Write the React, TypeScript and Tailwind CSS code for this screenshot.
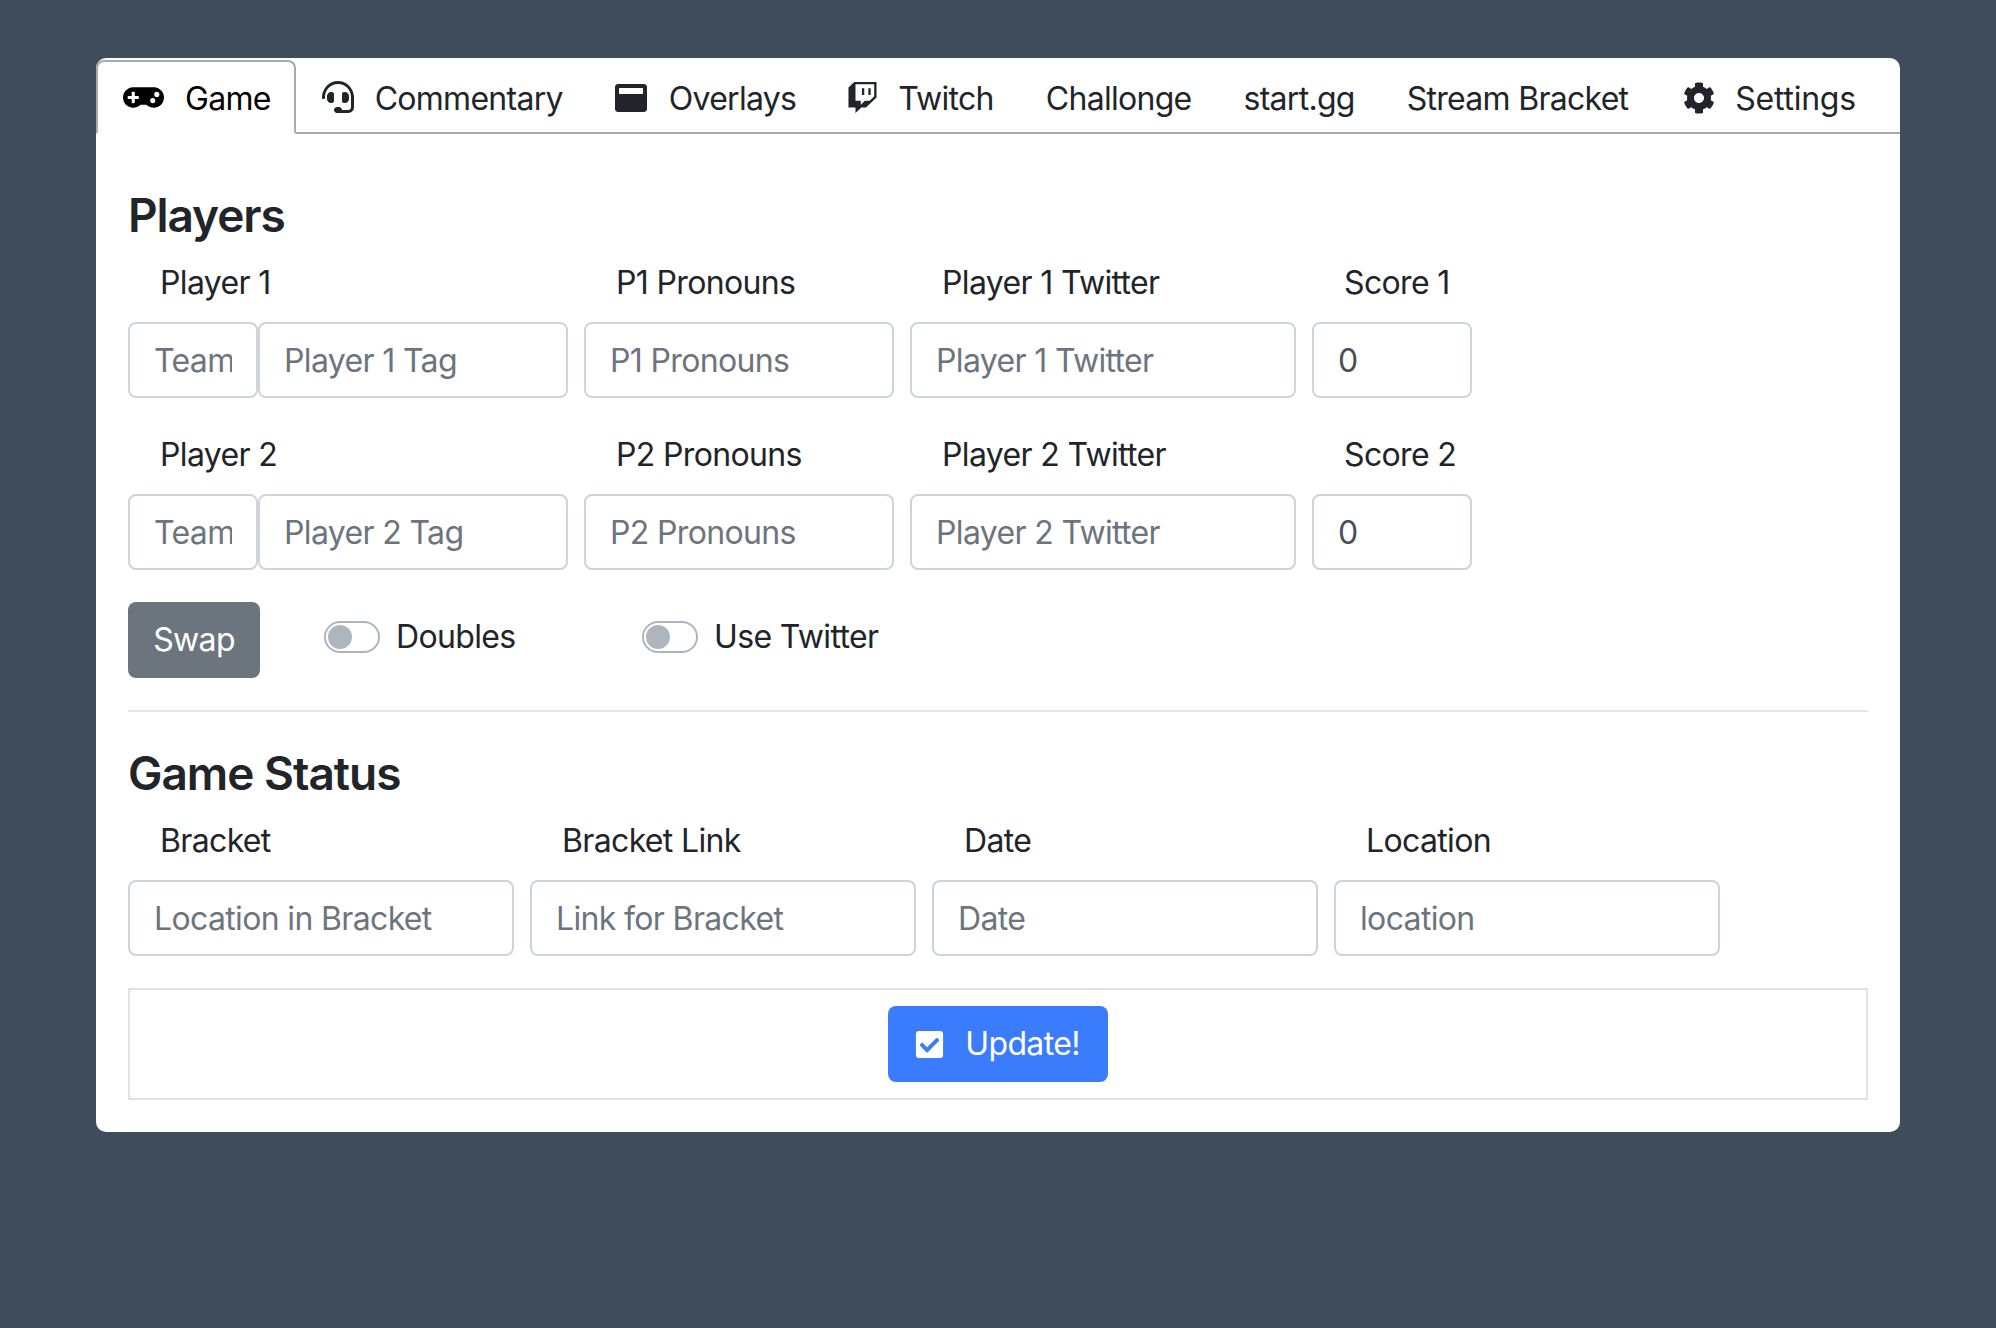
import React from "react";
import { FaGamepad, FaHeadset, FaWindowMaximize, FaTwitch, FaCog, FaCheckSquare } from "react-icons/fa";

const inputCls =
  "block h-[76px] rounded-[8px] border-2 border-[#ced4da] bg-white px-[24px] text-[#495057] placeholder:text-[#6c757d] outline-none min-w-0";

function Field({ label, width, placeholder, value }: { label: string; width: string; placeholder?: string; value?: string }) {
  return (
    <div className={width}>
      <div className="mb-[15px] h-12 px-[32px] leading-[48px] whitespace-nowrap">{label}</div>
      <input className={inputCls + " w-full"} placeholder={placeholder} defaultValue={value} />
    </div>
  );
}

function PlayerRow({ n }: { n: number }) {
  return (
    <div className="flex gap-4">
      <div className="w-[440px]">
        <div className="mb-[15px] h-12 px-[32px] leading-[48px]">Player {n}</div>
        <div className="flex">
          <input className={inputCls + " w-[130px]"} placeholder="Team" />
          <input className={inputCls + " w-[310px]"} placeholder={`Player ${n} Tag`} />
        </div>
      </div>
      <Field label={`P${n} Pronouns`} width="w-[310px]" placeholder={`P${n} Pronouns`} />
      <Field label={`Player ${n} Twitter`} width="w-[386px]" placeholder={`Player ${n} Twitter`} />
      <Field label={`Score ${n}`} width="w-[160px]" value="0" />
    </div>
  );
}

function Toggle({ label, width }: { label: string; width: string }) {
  return (
    <div className={"flex items-center " + width}>
      <span className="flex h-8 w-[56px] items-center rounded-full border-2 border-[#adb5bd] bg-white px-[2px]">
        <span className="h-6 w-6 rounded-full bg-[#adb5bd]" />
      </span>
      <span className="mt-[1px] ml-4 leading-8">{label}</span>
    </div>
  );
}

function Tab({ icon, label, active, labelClass }: { icon?: React.ReactNode; label: string; active?: boolean; labelClass?: string }) {
  return (
    <div
      className={
        "-mb-[2px] flex h-[74px] items-center whitespace-nowrap tracking-[-0.72px] " +
        (active
          ? "rounded-t-[8px] border-2 border-b-white border-[#a9a9a9] bg-white pr-[23px] pl-[25px] text-black"
          : "px-[26px] text-[#212529]")
      }
    >
      {icon}
      <span className={"mt-[3px] " + (labelClass ?? "")}>{label}</span>
    </div>
  );
}

export default function App() {
  return (
    <div
      className="min-h-[1328px] bg-[#3e4c5c] px-[96px] pt-[58px] text-[32px] tracking-[-0.65px] text-[#212529]"
      style={{ fontFamily: "Inter, 'Liberation Sans', sans-serif" }}
    >
      <div className="h-[1074px] rounded-[10px] bg-white">
        <div className="flex border-b-2 border-[#a9a9a9] pt-[2px]">
          <Tab active label="Game" icon={<FaGamepad className="mr-[21px] text-[41px]" />} />
          <Tab label="Commentary" icon={<FaHeadset className="mr-[21px] text-[32px]" />} />
          <Tab label="Overlays" icon={<FaWindowMaximize className="mt-[2px] mr-[22px] text-[32px]" />} />
          <Tab label="Twitch" icon={<FaTwitch className="-ml-[1px] mr-[20px] text-[31px]" />} />
          <Tab label="Challonge" />
          <Tab label="start.gg" />
          <Tab label="Stream Bracket" />
          <Tab
            label="Settings"
            labelClass="tracking-[-0.25px]"
            icon={<FaCog className="mt-[2px] ml-[3px] mr-[20px] text-[32px]" />}
          />
        </div>
        <div className="px-[32px] pt-[54px]">
          <h3 className="mb-[17px] text-[46px] leading-[54px] font-semibold tracking-[-1.1px]">Players</h3>
          <PlayerRow n={1} />
          <div className="h-[33px]" />
          <PlayerRow n={2} />
          <div className="mt-8 flex">
            <button className="h-[76px] w-[132px] rounded-[8px] bg-[#6c757d] text-white">Swap</button>
            <div className="ml-[64px] flex h-[68px] items-start pt-[18px]">
              <Toggle label="Doubles" width="w-[318px]" />
              <Toggle label="Use Twitter" width="w-[400px]" />
            </div>
          </div>
          <div className="mt-8 h-[2px] bg-[#e3e4e6]" />
          <h3 className="mt-[34px] mb-[17px] text-[46px] leading-[54px] font-semibold tracking-[-1px]">Game Status</h3>
          <div className="flex gap-4">
            <Field label="Bracket" width="w-[386px]" placeholder="Location in Bracket" />
            <Field label="Bracket Link" width="w-[386px]" placeholder="Link for Bracket" />
            <Field label="Date" width="w-[386px]" placeholder="Date" />
            <Field label="Location" width="w-[386px]" placeholder="location" />
          </div>
          <div className="mt-8 flex h-[112px] items-center justify-center border-2 border-[#dee2e6]">
            <button className="flex h-[76px] w-[220px] items-center justify-center rounded-[8px] bg-[#3a7cfb] pr-[2px] text-white">
              <FaCheckSquare className="mr-[20px] text-[31px]" />
              Update!
            </button>
          </div>
        </div>
      </div>
    </div>
  );
}
